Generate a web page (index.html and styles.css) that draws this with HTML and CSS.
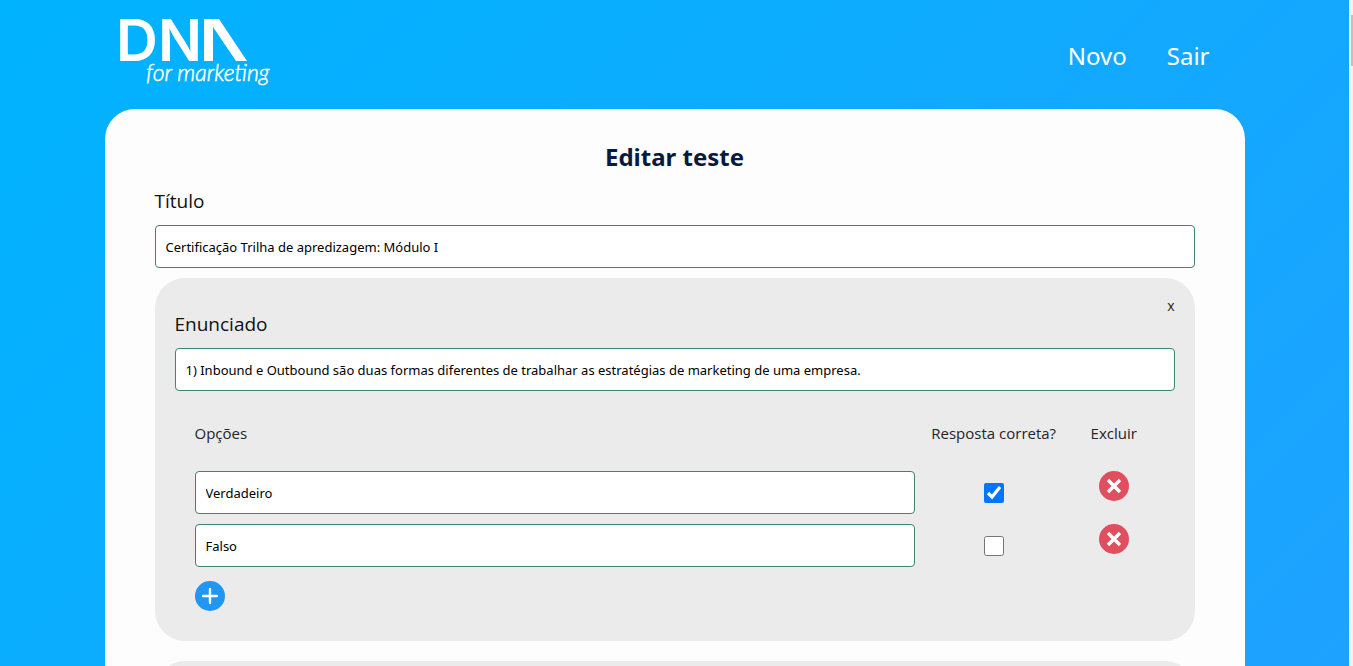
FILE: index.html
```html
<!DOCTYPE html>
<html lang="pt-BR">
<head>
<meta charset="utf-8">
<meta name="viewport" content="width=device-width, initial-scale=1">
<title>Editar teste</title>
<link rel="stylesheet" href="styles.css">
</head>
<body>
<div class="page">
  <header class="header">
    <a class="brand" href="#" aria-label="DNA for marketing">
      <svg class="logo" viewBox="0 0 156 76" width="156" height="76">
        <text class="logo-name" x="-4" y="43">DN</text>
        <path d="M84 1h15l28 42h-11L93 9v34h-9z"/>
        <text class="logo-tag" x="26" y="63">for marketing</text>
      </svg>
    </a>
    <nav class="nav">
      <a href="#">Novo</a>
      <a href="#">Sair</a>
    </nav>
  </header>

  <main class="card">
    <h1 class="title">Editar teste</h1>
    <form>
      <label class="label" for="titulo">Título</label>
      <input class="field" id="titulo" type="text" value="Certificação Trilha de apredizagem: Módulo I">

      <section class="question">
        <div class="question-top">
          <button class="close" type="button" aria-label="Remover questão">x</button>
        </div>
        <label class="label" for="enunciado">Enunciado</label>
        <input class="field" id="enunciado" type="text" value="1) Inbound e Outbound são duas formas diferentes de trabalhar as estratégias de marketing de uma empresa.">

        <div class="options">
          <table class="options-table">
            <colgroup><col class="col-text"><col class="col-check"><col class="col-delete"></colgroup>
            <thead>
              <tr><th class="left" scope="col">Opções</th><th scope="col">Resposta correta?</th><th scope="col">Excluir</th></tr>
            </thead>
            <tbody>
              <tr>
                <td><input class="field" type="text" aria-label="Opção 1" value="Verdadeiro"></td>
                <td><input class="check" type="checkbox" aria-label="Opção 1 correta" checked></td>
                <td class="top"><button class="round" type="button" aria-label="Excluir opção 1"><svg viewBox="0 0 30 30" width="30" height="30"><circle cx="15" cy="15" r="15" fill="#e04f5f"/><path d="M9 9l12 12M21 9L9 21" stroke="#fff" stroke-width="3.4"/></svg></button></td>
              </tr>
              <tr>
                <td><input class="field" type="text" aria-label="Opção 2" value="Falso"></td>
                <td><input class="check" type="checkbox" aria-label="Opção 2 correta"></td>
                <td class="top"><button class="round" type="button" aria-label="Excluir opção 2"><svg viewBox="0 0 30 30" width="30" height="30"><circle cx="15" cy="15" r="15" fill="#e04f5f"/><path d="M9 9l12 12M21 9L9 21" stroke="#fff" stroke-width="3.4"/></svg></button></td>
              </tr>
            </tbody>
          </table>
          <button class="round" type="button" aria-label="Adicionar opção"><svg viewBox="0 0 30 30" width="30" height="30"><circle cx="15" cy="15" r="15" fill="#2196f3"/><path d="M15 8v14M8 15h14" stroke="#fff" stroke-width="2.4" stroke-linecap="round"/></svg></button>
        </div>
      </section>

      <section class="question"></section>
    </form>
  </main>
</div>
<div class="scrollbar" aria-hidden="true"><div class="thumb"></div></div>
</body>
</html>
```
FILE: styles.css
```css
* { box-sizing: border-box; }

body {
  margin: 0;
  height: 100vh;
  display: flex;
  overflow: hidden;
  font-family: "Noto Sans", sans-serif;
  font-size: 16px;
  color: #212529;
}

.page {
  flex: 1;
  overflow: hidden;
  background: linear-gradient(135deg, #00b3ff, #1ea2ff);
}

.header {
  max-width: 1140px;
  margin: 0 auto;
  padding: 18px 35px 15px 15px;
  display: flex;
  align-items: center;
  justify-content: space-between;
}

.brand, .logo { display: block; }
.logo { fill: #fff; overflow: visible; }
.logo-name { font: 600 58px Inter, sans-serif; }
.logo-tag {
  font: italic 300 23px Lato, sans-serif;
  stroke: #fff;
  stroke-width: 0.5;
}

.nav { display: flex; gap: 40px; }
.nav a {
  color: #fff;
  font-size: 24px;
  line-height: 36px;
  text-decoration: none;
}

.card {
  max-width: 1140px;
  min-height: 100%;
  margin: 0 auto;
  padding: 32px 50px;
  border-radius: 30px;
  background: #fdfdfd;
}

.title {
  margin: 0 0 12px;
  font-size: 24px;
  line-height: 32px;
  text-align: center;
  color: #0a1a3c;
}

.label {
  display: block;
  margin-bottom: 8px;
  font-family: "Open Sans", sans-serif;
  font-size: 19px;
  line-height: 32px;
  color: #111;
}

.field {
  display: block;
  width: 100%;
  height: 43px;
  padding: 0 10px;
  border: 1px solid #3d856c;
  border-radius: 4px;
  background: #fff;
  color: #000;
  font-family: inherit;
  font-size: 13px;
}

.question {
  min-height: 80px;
  margin: 10px 0 20px;
  padding: 20px 20px 30px;
  border-radius: 30px;
  background: #ebebeb;
}

.question-top {
  display: flex;
  justify-content: flex-end;
  height: 10px;
}

.close {
  height: 16px;
  padding: 0;
  border: 0;
  background: none;
  color: #212529;
  font: 14px/16px "Open Sans", sans-serif;
}

.options { padding: 20px 20px 0; }

.options-table {
  width: 100%;
  margin-bottom: 4px;
  table-layout: fixed;
  border-collapse: collapse;
}
.col-text { width: 75%; }
.col-check { width: 16.5%; }
.col-delete { width: 8.5%; }

th {
  height: 60px;
  padding: 0 0 16px;
  font-family: "Open Sans", sans-serif;
  font-size: 15px;
  font-weight: normal;
}
th.left { text-align: left; }
td { padding: 0 0 10px; text-align: center; }
td.top { vertical-align: top; }

.check {
  display: block;
  width: 20px;
  height: 20px;
  margin: 0 auto;
  accent-color: #0075ff;
}

.round {
  display: block;
  width: 30px;
  height: 30px;
  margin: 0;
  padding: 0;
  border: 0;
  background: none;
}
td .round { margin: 0 auto; }
.round svg { display: block; }

.scrollbar {
  width: 4px;
  padding: 15px 0 0 2px;
  background: #f1f1f1;
}
.thumb { height: 51px; background: #c1c1c1; }
```
